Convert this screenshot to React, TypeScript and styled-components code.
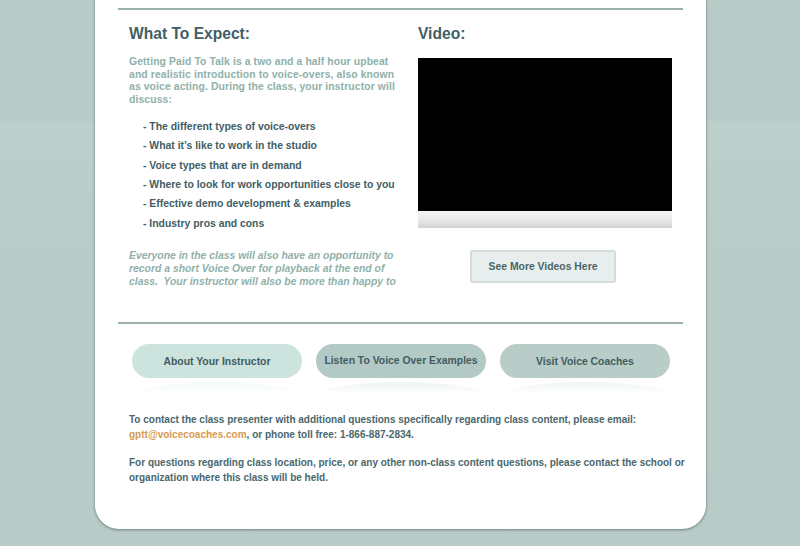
import React from "react";
import styled, { createGlobalStyle } from "styled-components";

const Global = createGlobalStyle`
  html, body { margin: 0; padding: 0; }
  body {
    background: #b8cbc7;
    font-family: "Liberation Sans", Arial, sans-serif;
  }
`;

const Page = styled.div`
  width: 800px;
  height: 546px;
  overflow: hidden;
  background: linear-gradient(
    to bottom,
    #b8cbc7 0px,
    #b8cbc7 121px,
    #bdcfcb 122px,
    #b9ccc8 260px,
    #b8cbc7 546px
  );
`;

const Card = styled.div`
  margin-left: 95px;
  width: 611px;
  height: 529px;
  box-sizing: border-box;
  background: #fff;
  border-radius: 0 0 24px 24px;
  box-shadow: 0 1px 3px rgba(60, 90, 85, 0.55), 0 0 2px rgba(60, 90, 85, 0.35);
  padding: 8px 23px 0;
`;

const Rule = styled.div`
  height: 2px;
  background: #9cb0b0;
`;

const Columns = styled.div`
  display: flex;
  height: 312px;
`;

const LeftCol = styled.div`
  width: 272px;
  padding-left: 11px;
  box-sizing: content-box;
`;

const RightCol = styled.div`
  margin-left: 17px;
  width: 254px;
  display: flex;
  flex-direction: column;
`;

const Heading = styled.h2`
  margin: 14px 0 0;
  font-size: 15.6px;
  line-height: 20px;
  font-weight: bold;
  color: #3f5e65;
`;

const Intro = styled.p`
  margin: 12px 0 0;
  font-size: 10.4px;
  line-height: 12.7px;
  font-weight: bold;
  letter-spacing: 0.1px;
  color: #8fb1a9;
`;

const List = styled.ul`
  list-style: none;
  margin: 10px 0 0;
  padding: 0 0 0 14px;
`;

const Item = styled.li`
  font-size: 10.4px;
  line-height: 19.4px;
  font-weight: bold;
  color: #3f5e65;
`;

const Closing = styled.p`
  margin: 17px 0 0;
  height: 38px;
  overflow: hidden;
  font-size: 10.4px;
  line-height: 12.7px;
  font-weight: bold;
  font-style: italic;
  color: #8fb1a9;
`;

const Video = styled.div`
  margin-top: 14px;
  width: 254px;
  display: flex;
  flex-direction: column;
`;

const Screen = styled.div`
  height: 153px;
  background: #000;
`;

const Controls = styled.div`
  height: 17px;
  background: linear-gradient(to bottom, #f6f6f6 0%, #e6e6e6 60%, #d2d2d2 100%);
`;

const VideoButton = styled.div`
  margin: 22px 0 0 52px;
  width: 142px;
  height: 29px;
  display: flex;
  align-items: center;
  justify-content: center;
  background: #e8eeed;
  border: 2px solid #d3dcda;
  border-radius: 3px;
  font-size: 10.4px;
  font-weight: bold;
  color: #4a6569;
`;

const Buttons = styled.div`
  display: flex;
  gap: 14px;
  padding: 20px 0 0 14px;
`;

const PillWrap = styled.div`
  display: flex;
  flex-direction: column;
  align-items: center;
`;

const Pill = styled.div<{ $bg: string; $lift?: number }>`
  width: 170px;
  height: 34px;
  border-radius: 17px;
  background: ${(p) => p.$bg};
  display: flex;
  align-items: center;
  justify-content: center;
  padding-bottom: ${(p) => (p.$lift ? p.$lift * 2 : 0)}px;
  box-sizing: border-box;
  font-size: 10.4px;
  font-weight: bold;
  color: #415c60;
`;

const Reflection = styled.div<{ $bg: string }>`
  margin-top: 4px;
  width: 160px;
  height: 12px;
  border-radius: 50% 50% 0 0 / 100% 100% 0 0;
  background: linear-gradient(to bottom, ${(p) => p.$bg} 0%, rgba(255, 255, 255, 0) 100%);
  opacity: 0.2;
`;

const Contact = styled.div`
  padding: 19px 0 0 11px;
  margin-right: -10px;
  font-size: 10px;
  line-height: 14.5px;
  font-weight: bold;
  color: #4a676c;
`;

const ContactPara = styled.p`
  margin: 0 0 14px;
`;

const Email = styled.span`
  color: #d69a52;
`;

const bullets = [
  "The different types of voice-overs",
  "What it\u2019s like to work in the studio",
  "Voice types that are in demand",
  "Where to look for work opportunities close to you",
  "Effective demo development & examples",
  "Industry pros and cons",
];

const pills = [
  { label: "About Your Instructor", bg: "#cde3de", lift: 0 },
  { label: "Listen To Voice Over Examples", bg: "#b3c9c5", lift: 1 },
  { label: "Visit Voice Coaches", bg: "#b8ccc8", lift: 0 },
];

export default function App() {
  return (
    <Page>
      <Global />
      <Card>
        <Rule />
        <Columns>
          <LeftCol>
            <Heading>What To Expect:</Heading>
            <Intro>
              Getting Paid To Talk is a two and a half hour upbeat and realistic
              introduction to voice-overs, also known as voice acting. During the
              class, your instructor will discuss:
            </Intro>
            <List>
              {bullets.map((b) => (
                <Item key={b}>- {b}</Item>
              ))}
            </List>
            <Closing>
              Everyone in the class will also have an opportunity to record a short
              Voice Over for playback at the end of class.&nbsp; Your instructor will
              also be more than happy to answer any questions you may have.
            </Closing>
          </LeftCol>
          <RightCol>
            <Heading>Video:</Heading>
            <Video>
              <Screen />
              <Controls />
            </Video>
            <VideoButton>See More Videos Here</VideoButton>
          </RightCol>
        </Columns>
        <Rule />
        <Buttons>
          {pills.map((p) => (
            <PillWrap key={p.label}>
              <Pill $bg={p.bg} $lift={p.lift}>
                {p.label}
              </Pill>
              <Reflection $bg={p.bg} />
            </PillWrap>
          ))}
        </Buttons>
        <Contact>
          <ContactPara>
            To contact the class presenter with additional questions specifically
            regarding class content, please email:{" "}
            <Email>gptt@voicecoaches.com</Email>, or phone toll free: 1-866-887-2834.
          </ContactPara>
          <ContactPara>
            For questions regarding class location, price, or any other non-class
            content questions, please contact the school or organization where this
            class will be held.
          </ContactPara>
        </Contact>
      </Card>
    </Page>
  );
}
